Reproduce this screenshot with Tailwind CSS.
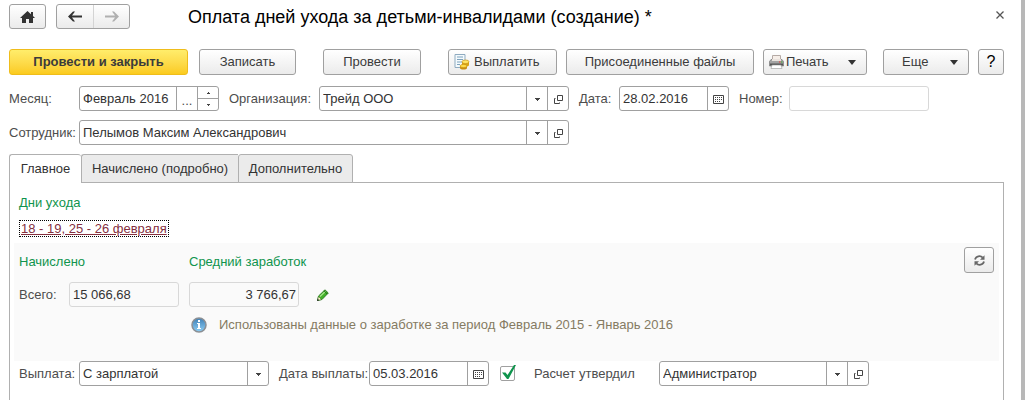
<!DOCTYPE html>
<html lang="ru">
<head>
  <meta charset="utf-8">
  <meta name="viewport" content="width=device-width, initial-scale=1">
  <title>Оплата дней ухода за детьми-инвалидами</title>
  <script src="https://cdn.jsdelivr.net/npm/@tailwindcss/browser@4"></script>
</head>
<body class="bg-white font-['Liberation_Sans',Arial,sans-serif] text-[13px] leading-5 text-[#4d4d4d]">

  <!-- shared icons -->
  <svg class="hidden">
    <symbol id="i-down" viewBox="0 0 5 3"><path d="M0 0h5v1h-1v1h-1v1h-1v-1h-1v-1h-1z" fill="#444"/></symbol>
    <symbol id="i-open" viewBox="0 0 9 9"><path d="M3.500 .5h5v5h-5zM1.500 3.500h-1v5h5v-1" fill="none" stroke="#444"/></symbol>
    <symbol id="i-cal" viewBox="0 0 11 9">
      <path d="M.5 .5h10v8h-10z" fill="none" stroke="#444"/>
      <path d="M2 2.500h7M2 4.500h7M2 6.500h5" stroke="#444" stroke-dasharray="1 1"/>
    </symbol>
    <symbol id="i-caret" viewBox="0 0 8 5"><path d="M0 0h8L4 5z" fill="#333"/></symbol>
  </svg>

  <div class="flex min-h-screen flex-col overflow-hidden border-r-4 border-[#b8b8b8] pt-1 pr-[17px] pl-[9px]">

    <header class="flex items-center">
      <button aria-label="Домой" class="flex h-[25px] w-[37px] items-center justify-center rounded-[3px] border border-[#a0a0a0] bg-linear-to-b from-white to-[#ebebeb]">
        <svg class="h-3 w-[15px]" viewBox="0 0 15 12"><path d="M7.500 0L11 3.200V1h2v4L15 7h-2v5H9V8H6v4H2V7H0z" fill="#333"/></svg>
      </button>
      <div class="ml-[10px] flex h-[25px] rounded-[3px] border border-[#a0a0a0] bg-linear-to-b from-white to-[#ebebeb]">
        <button aria-label="Назад" class="flex w-9 items-center justify-center">
          <svg class="h-[11px] w-[14px]" viewBox="0 0 14 11"><path d="M0 5.500L5 .5h2L4 4.500h10v2H4l3 4H5z" fill="#333"/></svg>
        </button>
        <button aria-label="Вперед" class="flex w-9 items-center justify-center border-l border-[#d4d4d4]">
          <svg class="h-[11px] w-[14px]" viewBox="0 0 14 11"><path d="M14 5.500L9 .5H7l3 4H0v2h10l-3 4h2z" fill="#b0b0b0"/></svg>
        </button>
      </div>
      <h1 class="ml-[58px] text-lg leading-6 text-black">Оплата дней ухода за детьми-инвалидами (создание) *</h1>
      <button aria-label="Закрыть" class="mb-1 ml-auto">
        <svg class="size-2" viewBox="0 0 8 8"><path d="M.5 .5l7 7M7.500 .5l-7 7" stroke="#555" stroke-width="1.300"/></svg>
      </button>
    </header>

    <div class="mt-5 flex h-[26px] text-[#3b3b3b]">
      <button class="w-[179px] rounded-[3px] border border-[#efbd1b] bg-linear-to-b from-[#ffed6b] to-[#fbcb1c] font-bold">Провести и закрыть</button>
      <button class="ml-[11px] w-[97px] rounded-[3px] border border-[#a0a0a0] bg-linear-to-b from-white to-[#ebebeb]">Записать</button>
      <button class="ml-[27px] w-[98px] rounded-[3px] border border-[#a0a0a0] bg-linear-to-b from-white to-[#ebebeb]">Провести</button>
      <button class="ml-[27px] flex w-[109px] items-center gap-1 rounded-[3px] border border-[#a0a0a0] bg-linear-to-b from-white to-[#ebebeb] pl-[5px]">
        <svg class="size-4" viewBox="0 0 16 16">
          <path d="M1 .5h10v13H1z" fill="#f4fafd" stroke="#8fabc0"/>
          <path d="M3 3h6M3 5.500h6M3 8h5M3 10.500h3" stroke="#7da2bd"/>
          <path d="M8 8v3c0 2 7 2 7 0V8z" fill="#d9a316"/>
          <ellipse cx="11.500" cy="7.800" rx="3.500" ry="1.800" fill="#ffe566" stroke="#c99314" stroke-width=".7"/>
          <path d="M6 12v2c0 2 7 2 7 0v-2z" fill="#c88d10"/>
          <ellipse cx="9.500" cy="12" rx="3.500" ry="1.600" fill="#ffdc4a" stroke="#c99314" stroke-width=".7"/>
        </svg>
        Выплатить
      </button>
      <button class="ml-[9px] w-[188px] rounded-[3px] border border-[#a0a0a0] bg-linear-to-b from-white to-[#ebebeb]">Присоединенные файлы</button>
      <button class="ml-[9px] flex w-[104px] items-center gap-[2px] rounded-[3px] border border-[#a0a0a0] bg-linear-to-b from-white to-[#ebebeb] pr-[10px] pl-[5px]">
        <svg class="h-[14px] w-[15px]" viewBox="0 0 15 14">
          <path d="M3.500 5V.5h8V5" fill="#f6eee8" stroke="#b5aaa5"/>
          <path d="M2 4.500h11l1.500 2V11h-14V6.500z" fill="#a3a3a3" stroke="#777" stroke-width=".7"/>
          <path d="M3 4h9v2H3z" fill="#e9e2dd"/>
          <path d="M1 8.500h13v2H1z" fill="#555"/>
          <path d="M10 7h1.500" stroke="#e33"/><path d="M12 7h1.500" stroke="#3a3"/>
          <path d="M3 10h9l1 3.500H2z" fill="#fff" stroke="#999" stroke-width=".6"/>
        </svg>
        Печать
        <svg class="ml-auto h-[5px] w-2"><use href="#i-caret"/></svg>
      </button>
      <button class="ml-[16px] flex w-[86px] items-center justify-between rounded-[3px] border border-[#a0a0a0] bg-linear-to-b from-white to-[#ebebeb] pr-[10px] pl-[18px]">
        Еще
        <svg class="h-[5px] w-2"><use href="#i-caret"/></svg>
      </button>
      <button class="ml-[9px] w-[26px] rounded-[3px] border border-[#a0a0a0] bg-linear-to-b from-white to-[#ebebeb] text-base leading-6 text-black">?</button>
    </div>

    <div class="mt-[11px] flex h-[25px] items-center whitespace-nowrap">
      <label for="month" class="w-[70px]">Месяц:</label>
      <div class="flex h-full w-[140px] rounded-[3px] border border-[#a0a0a0]">
        <input id="month" value="Февраль 2016" class="min-w-0 flex-1 pl-[3px] text-[#333] outline-none">
        <button aria-label="Выбрать месяц" class="w-[21px] border-l border-[#a0a0a0] pt-1">...</button>
        <div class="flex w-[21px] flex-col border-l border-[#a0a0a0]">
          <button aria-label="Следующий месяц" class="flex flex-1 items-center justify-center"><svg class="h-[2px] w-[3px]" viewBox="0 0 3 2"><path d="M1 0h1v1h1v1H0V1h1z" fill="#444"/></svg></button>
          <button aria-label="Предыдущий месяц" class="flex flex-1 items-center justify-center border-t border-[#a0a0a0]"><svg class="h-[2px] w-[3px]" viewBox="0 0 3 2"><path d="M0 0h3v1H2v1H1V1H0z" fill="#444"/></svg></button>
        </div>
      </div>
      <label for="org" class="ml-[10px] w-[90px]">Организация:</label>
      <div class="flex h-full w-[250px] rounded-[3px] border border-[#a0a0a0]">
        <input id="org" value="Трейд ООО" class="min-w-0 flex-1 pl-[3px] text-[#333] outline-none">
        <button aria-label="Список" class="flex w-[21px] items-center justify-center border-l border-[#a0a0a0] pt-px"><svg class="h-[3px] w-[5px]"><use href="#i-down"/></svg></button>
        <button aria-label="Открыть" class="flex w-[21px] items-center justify-center border-l border-[#a0a0a0] pt-[2px]"><svg class="size-[9px]"><use href="#i-open"/></svg></button>
      </div>
      <label for="date" class="ml-[10px] w-[40px]">Дата:</label>
      <div class="flex h-full w-[110px] rounded-[3px] border border-[#a0a0a0]">
        <input id="date" value="28.02.2016" class="min-w-0 flex-1 pl-[3px] text-[#333] outline-none">
        <button aria-label="Календарь" class="flex w-[21px] items-center justify-center border-l border-[#a0a0a0] pt-[2px]"><svg class="h-[9px] w-[11px]"><use href="#i-cal"/></svg></button>
      </div>
      <label for="num" class="ml-[10px] w-[50px]">Номер:</label>
      <input id="num" class="h-full w-[140px] rounded-[3px] border border-[#d8d8d8] px-[3px] outline-none">
    </div>

    <div class="mt-[9px] flex h-[25px] items-center whitespace-nowrap">
      <label for="emp" class="w-[70px]">Сотрудник:</label>
      <div class="flex h-full w-[490px] rounded-[3px] border border-[#a0a0a0]">
        <input id="emp" value="Пелымов Максим Александрович" class="min-w-0 flex-1 pl-[3px] text-[#333] outline-none">
        <button aria-label="Список" class="flex w-[21px] items-center justify-center border-l border-[#a0a0a0] pt-px"><svg class="h-[3px] w-[5px]"><use href="#i-down"/></svg></button>
        <button aria-label="Открыть" class="flex w-[21px] items-center justify-center border-l border-[#a0a0a0] pt-[2px]"><svg class="size-[9px]"><use href="#i-open"/></svg></button>
      </div>
    </div>

    <!-- tabs -->
    <div role="tablist" class="z-10 mt-[9px] -mb-px flex h-[29px] text-[#333]">
      <button role="tab" aria-selected="true" class="w-[72px] rounded-t-[3px] border-t border-l border-[#b0b0b0] bg-white">Главное</button>
      <button role="tab" class="w-[157px] rounded-tl-[3px] border-t border-b border-l border-[#b0b0b0] bg-[#ebebeb]">Начислено (подробно)</button>
      <button role="tab" class="w-[115px] rounded-t-[3px] border border-[#b0b0b0] bg-[#ebebeb]">Дополнительно</button>
    </div>

    <main class="flex-1 border border-b-0 border-[#b0b0b0] px-1 pt-[10px]">
      <h2 class="pl-[5px] text-[#0f944d]">Дни ухода</h2>
      <a href="#" class="mt-[7px] ml-[5px] block w-fit border border-dotted border-black px-px leading-[15px] text-[#85303f] underline">18 - 19, 25 - 26 февраля</a>

      <section class="mt-[6px] flex h-[118px] items-start justify-between bg-[#fafafa] pt-1 pr-[5px] pl-[5px]">
        <div>
          <div class="mt-[5px] flex text-[#0f944d]">
            <h2 class="w-[170px]">Начислено</h2>
            <h2>Средний заработок</h2>
          </div>
          <div class="mt-[10px] flex h-[25px] items-center">
            <label for="total" class="w-[50px]">Всего:</label>
            <input id="total" readonly value="15 066,68" class="h-full w-[110px] rounded-[3px] border border-[#d8d8d8] px-[3px] text-[#333] outline-none">
            <input aria-label="Средний заработок" readonly value="3 766,67" class="ml-[10px] h-full w-[110px] rounded-[3px] border border-[#d8d8d8] px-[2px] text-right text-[#333] outline-none">
            <button aria-label="Изменить" class="ml-[18px]">
              <svg class="size-3" viewBox="0 0 12 12">
                <path d="M.5 11.500L1.500 7L8 .8L11.300 4L5 10.500z" fill="#43b02a" stroke="#1e6b14" stroke-width=".8"/>
                <path d="M3 7.500L8.500 2.300" stroke="#a5e58a" stroke-width="1.200"/>
                <path d="M.5 11.500L1.500 7.500L4.500 10.500z" fill="#fff3c9" stroke="#356b20" stroke-width=".5"/>
                <path d="M0 12l.7-2.200L2.200 11.300z" fill="#222"/>
                <path d="M7 1.800l3.300 3.300" stroke="#1e6b14"/>
              </svg>
            </button>
          </div>
          <div class="mt-[8px] flex items-center pl-[172px] text-[#857b62]">
            <svg class="size-4" viewBox="0 0 16 16">
              <defs><linearGradient id="g-info" x2="0" y2="1"><stop stop-color="#3e7fb5"/><stop offset="1" stop-color="#8fd0f7"/></linearGradient></defs>
              <circle cx="8" cy="8" r="7" fill="url(#g-info)" stroke="#8b8f94" stroke-width="1.500"/>
              <path d="M7 3h2v2H7zM6 6h3v5h1v1H6v-1h1V7H6z" fill="#fff"/>
            </svg>
            <p class="ml-[12px]">Использованы данные о заработке за период Февраль 2015 - Январь 2016</p>
          </div>
        </div>
        <button aria-label="Обновить" class="flex h-[26px] w-[30px] items-center justify-center rounded-[3px] border border-[#a0a0a0] bg-linear-to-b from-white to-[#ebebeb]">
          <svg class="size-[11px]" viewBox="0 0 11 11">
            <path d="M1 4.500C2 .8 6.500 .3 8.700 2.700M10 6.500C9 10.200 4.500 10.700 2.300 8.300" fill="none" stroke="#666" stroke-width="1.800"/>
            <path d="M10.500 .3v4.500H6zM.5 10.700V6.200H5z" fill="#666"/>
          </svg>
        </button>
      </section>

      <div class="flex h-[25px] items-center pl-[5px] whitespace-nowrap">
        <label for="pay" class="w-[60px]">Выплата:</label>
        <div class="relative h-full w-[190px]">
          <select id="pay" class="h-full w-full appearance-none rounded-[3px] border border-[#a0a0a0] pl-[3px] text-[#333] outline-none">
            <option>С зарплатой</option>
          </select>
          <span class="pointer-events-none absolute inset-y-px right-px flex w-[21px] items-center justify-center border-l border-[#a0a0a0] pt-px"><svg class="h-[3px] w-[5px]"><use href="#i-down"/></svg></span>
        </div>
        <label for="paydate" class="ml-[10px] w-[90px]">Дата выплаты:</label>
        <div class="flex h-full w-[120px] rounded-[3px] border border-[#a0a0a0]">
          <input id="paydate" value="05.03.2016" class="min-w-0 flex-1 pl-[3px] text-[#333] outline-none">
          <button aria-label="Календарь" class="flex w-[21px] items-center justify-center border-l border-[#a0a0a0] pt-[2px]"><svg class="h-[9px] w-[11px]"><use href="#i-cal"/></svg></button>
        </div>
        <div class="relative ml-[11px] size-[15px]">
          <input id="approved" type="checkbox" checked class="block size-full appearance-none rounded-[2px] border border-[#a0a0a0]">
          <svg class="pointer-events-none absolute -top-px left-0 h-[15px] w-4" viewBox="0 0 16 15"><path d="M2 7.500L5.500 7.500L7.500 10L14 0h2L8.500 14H7z" fill="#0f944d"/></svg>
        </div>
        <label for="approved" class="ml-[19px] w-[125px]">Расчет утвердил</label>
        <div class="flex h-full w-[210px] rounded-[3px] border border-[#a0a0a0]">
          <input aria-label="Утвердил" value="Администратор" class="min-w-0 flex-1 pl-[3px] text-[#333] outline-none">
          <button aria-label="Список" class="flex w-[21px] items-center justify-center border-l border-[#a0a0a0] pt-px"><svg class="h-[3px] w-[5px]"><use href="#i-down"/></svg></button>
          <button aria-label="Открыть" class="flex w-[21px] items-center justify-center border-l border-[#a0a0a0] pt-[2px]"><svg class="size-[9px]"><use href="#i-open"/></svg></button>
        </div>
      </div>
    </main>
  </div>
</body>
</html>
